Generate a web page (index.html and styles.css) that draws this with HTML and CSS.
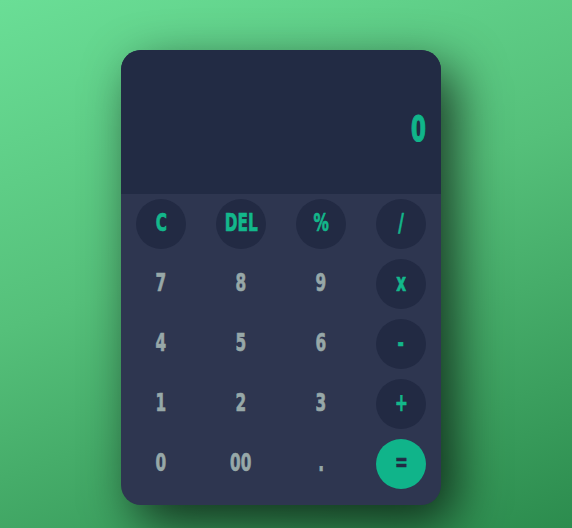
FILE: index.html
```html
<!DOCTYPE html>
<html>
<head>
<meta charset="utf-8">
<link rel="stylesheet" href="styles.css">
</head>
<body>
<div class="calc">
  <div class="display"><span class="txt">0</span></div>
  <div class="keys">
    <div class="cell"><span class="btn op"><span class="txt">C</span></span></div>
    <div class="cell"><span class="btn op"><span class="txt">DEL</span></span></div>
    <div class="cell"><span class="btn op"><span class="txt">%</span></span></div>
    <div class="cell"><span class="btn op"><span class="txt">/</span></span></div>
    <div class="cell"><span class="btn num"><span class="txt">7</span></span></div>
    <div class="cell"><span class="btn num"><span class="txt">8</span></span></div>
    <div class="cell"><span class="btn num"><span class="txt">9</span></span></div>
    <div class="cell"><span class="btn op"><span class="txt">x</span></span></div>
    <div class="cell"><span class="btn num"><span class="txt">4</span></span></div>
    <div class="cell"><span class="btn num"><span class="txt">5</span></span></div>
    <div class="cell"><span class="btn num"><span class="txt">6</span></span></div>
    <div class="cell"><span class="btn op"><span class="txt">-</span></span></div>
    <div class="cell"><span class="btn num"><span class="txt">1</span></span></div>
    <div class="cell"><span class="btn num"><span class="txt">2</span></span></div>
    <div class="cell"><span class="btn num"><span class="txt">3</span></span></div>
    <div class="cell"><span class="btn op"><span class="txt">+</span></span></div>
    <div class="cell"><span class="btn num"><span class="txt">0</span></span></div>
    <div class="cell"><span class="btn num"><span class="txt">00</span></span></div>
    <div class="cell"><span class="btn num"><span class="txt">.</span></span></div>
    <div class="cell"><span class="btn eq"><span class="txt">=</span></span></div>
  </div>
</div>
</body>
</html>
```
FILE: styles.css
```css
html, body {
  margin: 0;
  height: 100%;
}
body {
  background: linear-gradient(160deg, #6ade96 0%, #55c07a 45%, #2c8c4e 100%);
  font-family: "DejaVu Sans Condensed", "DejaVu Sans", sans-serif;
  font-stretch: condensed;
  font-weight: bold;
  display: flex;
  justify-content: center;
  padding-top: 50px;
  padding-right: 10px;
  box-sizing: border-box;
  overflow: hidden;
}
.calc {
  width: 320px;
  height: 455px;
  border-radius: 20px;
  overflow: hidden;
  background: #2e3650;
  box-shadow: 14px 18px 50px rgba(0, 0, 0, 0.7);
  display: flex;
  flex-direction: column;
}
.txt {
  display: inline-block;
  transform: scaleX(0.68);
  -webkit-text-stroke: 0.7px currentColor;
}
.display {
  height: 144px;
  background: #222b44;
  color: #10b58a;
  font-size: 35px;
  display: flex;
  align-items: center;
  justify-content: flex-end;
  padding-right: 15px;
  padding-top: 14px;
  box-sizing: border-box;
}
.display .txt {
  transform-origin: right center;
  -webkit-text-stroke: 1.2px currentColor;
}
.keys {
  display: grid;
  grid-template-columns: repeat(4, 80px);
  grid-auto-rows: 60px;
}
.cell {
  display: flex;
  align-items: center;
  justify-content: center;
}
.btn {
  width: 50px;
  height: 50px;
  border-radius: 50%;
  display: flex;
  align-items: center;
  justify-content: center;
  font-size: 25px;
  padding-bottom: 3px;
  box-sizing: border-box;
}
.op {
  background: #222a43;
  color: #13b78b;
}
.num {
  color: #97a8a8;
}
.eq {
  background: #10b48a;
  color: #222a43;
}
```
